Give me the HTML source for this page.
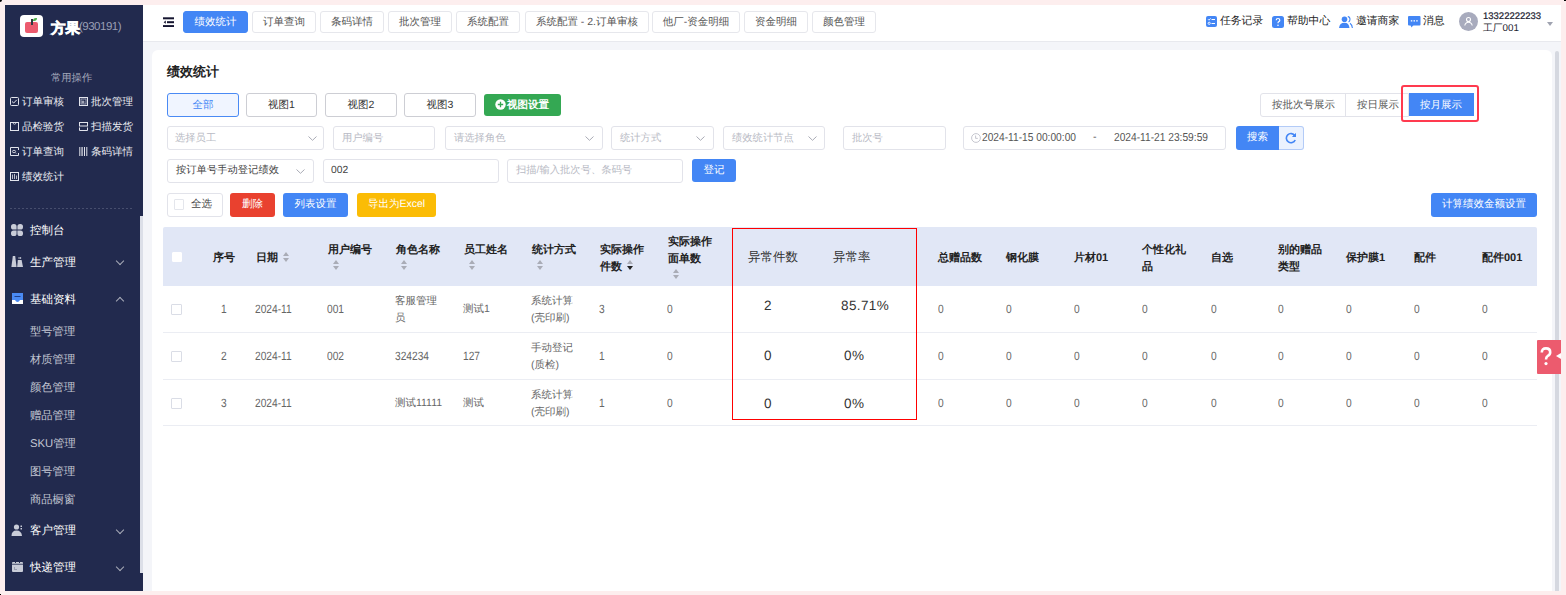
<!DOCTYPE html>
<html><head><meta charset="utf-8">
<style>
*{margin:0;padding:0;box-sizing:border-box;}
html,body{text-rendering:geometricPrecision;width:1566px;height:595px;overflow:hidden;background:#fdeeee;font-family:"Liberation Sans",sans-serif;}
.a{position:absolute;}
svg.a{z-index:2;}
.t{position:absolute;white-space:nowrap;}
#side{left:5px;top:5px;width:138px;height:586px;background:#222a4e;}
#hdr{left:143px;top:5px;width:1418px;height:37px;background:#fff;border-bottom:1px solid #e8e9ee;}
#main{left:143px;top:42px;width:1418px;height:549px;background:#f4f5f9;}
#card{left:152px;top:50px;width:1400px;height:541px;background:#fff;border-radius:6px 6px 0 0;}
.tab{position:absolute;top:11px;height:22px;border:1px solid #e6e7ec;border-radius:3px;font-size:10.5px;color:#555;text-align:center;line-height:20px;background:#fff;}
.tab.on{background:#4386f5;border-color:#4386f5;color:#fff;}
.sbi{position:absolute;font-size:10.5px;color:#e9eaf0;line-height:12px;white-space:nowrap;}
.btn{position:absolute;height:24px;border-radius:3px;font-size:10.5px;text-align:center;line-height:22px;white-space:nowrap;}
.inp{position:absolute;height:24px;border:1px solid #e2e3ea;border-radius:3px;font-size:10.3px;color:#b8bac4;line-height:22px;padding-left:8px;white-space:nowrap;background:#fff;}
.chev{position:absolute;width:6px;height:6px;border-right:1px solid #a8abb8;border-bottom:1px solid #a8abb8;transform:rotate(45deg);}
.chev.up{transform:rotate(-135deg);}
.mi{position:absolute;left:30px;font-size:11.5px;color:#fff;line-height:14px;white-space:nowrap;}
.si{position:absolute;left:30px;font-size:11.3px;color:#c3c6d2;line-height:14px;white-space:nowrap;}
.th{position:absolute;font-size:11px;font-weight:bold;color:#222;line-height:17.5px;white-space:nowrap;}
.td{position:absolute;font-size:10.5px;color:#666;line-height:17px;white-space:nowrap;}
.sort{position:absolute;width:6px;height:10px;}
.sort:before{content:"";position:absolute;left:0;top:0;border-left:3px solid transparent;border-right:3px solid transparent;border-bottom:4px solid #a9acb6;}
.sort:after{content:"";position:absolute;left:0;top:6px;border-left:3px solid transparent;border-right:3px solid transparent;border-top:4px solid #a9acb6;}
.sort.desc:after{border-top-color:#222;}
.cb{position:absolute;width:10px;height:10px;border:1px solid #e4e6ec;background:#fff;border-radius:1px;}
.num{position:absolute;font-size:13.5px;color:#333;line-height:18px;white-space:nowrap;letter-spacing:0.4px;}
.dg{font-size:12px;transform:scaleX(0.85);transform-origin:0 0;}
.hl{position:absolute;height:1px;background:#ebedf3;}
</style></head><body>

<!-- sidebar -->
<div id="side" class="a"></div>
<!-- logo -->
<div class="a" style="left:20px;top:15px;width:23px;height:22px;background:#fff;border-radius:4px;"></div>
<div class="a" style="left:25px;top:22px;width:13px;height:11px;background:#ec5b6e;border-radius:2px;"></div>
<div class="a" style="left:31px;top:19px;width:2px;height:6px;background:#2e3a40;"></div>
<div class="a" style="left:33px;top:18px;width:4px;height:3px;background:#4cb04a;border-radius:3px 0 3px 0;"></div>
<div class="t" style="left:51px;top:18.5px;font-size:14.5px;font-weight:bold;color:#fff;line-height:20px;-webkit-text-stroke:0.7px #fff;">方果</div>
<div class="t" style="left:79px;top:19px;font-size:11.5px;color:#9a9fb5;line-height:16px;letter-spacing:-0.5px;">(930191)</div>

<div class="t" style="left:51px;top:73px;font-size:10.3px;color:#a4a8bb;line-height:12px;">常用操作</div>
<svg class="a" style="left:10px;top:97px;" width="9" height="9" viewBox="0 0 9 9" fill="none" stroke="#e2e4ec" stroke-width="1"><rect x="0.5" y="0.5" width="8" height="8" rx="1"/><path d="M2 4.5 L3.7 6 L6.8 2.8"/></svg>
<div class="sbi" style="left:22px;top:96px;">订单审核</div>
<svg class="a" style="left:79px;top:97px;" width="9" height="9" viewBox="0 0 9 9" fill="none" stroke="#e2e4ec" stroke-width="1"><rect x="0.5" y="0.5" width="8" height="8"/><rect x="2" y="2" width="5" height="5" stroke="#9ea2b6"/><circle cx="4" cy="5" r="1" stroke="#d0d2dc"/></svg>
<div class="sbi" style="left:91px;top:96px;">批次管理</div>
<svg class="a" style="left:10px;top:122px;" width="9" height="9" viewBox="0 0 9 9" fill="none" stroke="#e2e4ec" stroke-width="1"><rect x="0.5" y="0.5" width="8" height="8"/><path d="M3.2 1 A1.3 1.3 0 0 0 5.8 1" stroke="#b8bbc8"/></svg>
<div class="sbi" style="left:22px;top:121px;">品检验货</div>
<svg class="a" style="left:79px;top:122px;" width="9" height="9" viewBox="0 0 9 9" fill="none" stroke="#e2e4ec" stroke-width="1"><rect x="0.5" y="0.5" width="8" height="3.5"/><path d="M0.5 5.5 V8.5 H8.5 V5.5"/></svg>
<div class="sbi" style="left:91px;top:121px;">扫描发货</div>
<svg class="a" style="left:10px;top:147px;" width="9" height="9" viewBox="0 0 9 9" fill="none" stroke="#e2e4ec" stroke-width="1"><path d="M8.5 3 V0.5 H0.5 V8.5 H8.5 V6"/><ellipse cx="4" cy="4.5" rx="1.6" ry="1.2" stroke="#c8cad6"/><path d="M5.2 5.5 L6.5 6.6" stroke="#9ea2b6"/></svg>
<div class="sbi" style="left:22px;top:146px;">订单查询</div>
<svg class="a" style="left:79px;top:147px;" width="9" height="9" viewBox="0 0 9 9" fill="#e2e4ec"><rect x="0.3" y="0" width="1" height="9"/><rect x="2.3" y="0" width="1.6" height="9" fill="#b5b8c6"/><rect x="5" y="0" width="1" height="9"/><rect x="7.3" y="0" width="1" height="9"/></svg>
<div class="sbi" style="left:91px;top:146px;">条码详情</div>
<svg class="a" style="left:10px;top:172px;" width="9" height="9" viewBox="0 0 9 9" fill="none" stroke="#e2e4ec" stroke-width="1"><rect x="0.5" y="0.5" width="8" height="8"/><path d="M2.5 2.5 V7 M4.5 2 V7 M6.5 3.5 V7" stroke="#b8bbc8"/></svg>
<div class="sbi" style="left:22px;top:171px;">绩效统计</div>
<div class="a" style="left:10px;top:208px;width:124px;height:1px;background:repeating-linear-gradient(90deg,#474e6e 0 2px,transparent 2px 4px);"></div>

<svg class="a" style="left:11px;top:224px;" width="12" height="12" viewBox="0 0 12 12" fill="#c9ccd8"><path d="M5.6 5.6 H2.6 A2.6 2.6 0 0 1 0 3 V2.6 A2.6 2.6 0 0 1 2.6 0 H3 A2.6 2.6 0 0 1 5.6 2.6 Z"/><path d="M6.4 5.6 H9.4 A2.6 2.6 0 0 0 12 3 V2.6 A2.6 2.6 0 0 0 9.4 0 H9 A2.6 2.6 0 0 0 6.4 2.6 Z"/><path d="M5.6 6.4 H2.6 A2.6 2.6 0 0 0 0 9 V9.4 A2.6 2.6 0 0 0 2.6 12 H3 A2.6 2.6 0 0 0 5.6 9.4 Z"/><path d="M6.4 6.4 H9.4 A2.6 2.6 0 0 1 12 9 V9.4 A2.6 2.6 0 0 1 9.4 12 H9 A2.6 2.6 0 0 1 6.4 9.4 Z"/></svg>
<div class="mi" style="top:224px;">控制台</div>
<svg class="a" style="left:11px;top:256px;" width="13" height="11" viewBox="0 0 13 11" fill="#c9ccd8"><path d="M1.8 0 H4.2 L5.6 11 H0.4 Z"/><path d="M6.8 4 H10.6 L12 11 H6.2 Z"/><rect x="7.6" y="1" width="0.9" height="2"/><rect x="9.2" y="1" width="0.9" height="2"/></svg>
<div class="mi" style="top:256px;">生产管理</div>
<div class="chev" style="left:117px;top:258px;"></div>
<svg class="a" style="left:12px;top:293px;" width="11" height="11" viewBox="0 0 11 11"><rect x="0" y="0" width="11" height="11" fill="#4a8af4"/><path d="M0 7 H3 Q4 9 5.5 9 Q7 9 8 7 H11 V11 H0 Z" fill="#fff"/><rect x="2.5" y="3" width="6" height="1" fill="#1f3f8a"/></svg>
<div class="mi" style="top:293px;">基础资料</div>
<div class="chev up" style="left:117px;top:298px;"></div>
<div class="si" style="top:324.5px;">型号管理</div>
<div class="si" style="top:352.5px;">材质管理</div>
<div class="si" style="top:380.5px;">颜色管理</div>
<div class="si" style="top:408.5px;">赠品管理</div>
<div class="si" style="top:436.5px;">SKU管理</div>
<div class="si" style="top:464.5px;">图号管理</div>
<div class="si" style="top:492.5px;">商品橱窗</div>
<svg class="a" style="left:11px;top:524px;" width="12" height="12" viewBox="0 0 12 12" fill="#c9ccd8"><circle cx="5.5" cy="3" r="2.6"/><path d="M0.5 12 Q0.5 6.5 5.5 6.5 Q10.5 6.5 11 12 Z"/><rect x="9.5" y="1.5" width="1.5" height="1.5"/><rect x="9.5" y="4" width="1.5" height="1.5"/></svg>
<div class="mi" style="top:524px;">客户管理</div>
<div class="chev" style="left:117px;top:527px;"></div>
<svg class="a" style="left:12px;top:561px;" width="11" height="11" viewBox="0 0 11 11" fill="#c9ccd8"><rect x="0" y="1" width="11" height="10" rx="1"/><rect x="0" y="2.8" width="11" height="0.8" fill="#222a4e"/><rect x="2" y="6" width="1" height="2" fill="#9a9eb0"/><rect x="2" y="8" width="3" height="1" fill="#9a9eb0"/><rect x="3" y="0" width="1" height="2" fill="#222a4e"/><rect x="7" y="0" width="1" height="2" fill="#222a4e"/></svg>
<div class="mi" style="top:561px;">快递管理</div>
<div class="chev" style="left:117px;top:564px;"></div>
<div class="a" style="left:140px;top:216px;width:3px;height:357px;background:#dcdfe8;"></div>

<!-- header -->
<div id="hdr" class="a"></div>
<div id="main" class="a"></div>
<div id="card" class="a"></div>

<div class="tab on" style="left:183px;width:65px;">绩效统计</div>
<div class="tab" style="left:252px;width:64px;">订单查询</div>
<div class="tab" style="left:320px;width:64px;">条码详情</div>
<div class="tab" style="left:388px;width:64px;">批次管理</div>
<div class="tab" style="left:456px;width:64px;">系统配置</div>
<div class="tab" style="left:525px;width:124px;">系统配置 - 2.订单审核</div>
<div class="tab" style="left:652px;width:88px;">他厂-资金明细</div>
<div class="tab" style="left:744px;width:64px;">资金明细</div>
<div class="tab" style="left:812px;width:64px;">颜色管理</div>

<svg class="a" style="left:163px;top:17px;" width="11" height="10" viewBox="0 0 11 10" fill="#151530"><rect x="0" y="0.3" width="11" height="2"/><rect x="4" y="4.2" width="7" height="2"/><path d="M0.6 5.2 L2.8 3.6 V6.8 Z"/><rect x="0" y="8.1" width="11" height="2"/></svg>
<svg class="a" style="left:1206px;top:16px;" width="11" height="11" viewBox="0 0 11 11"><rect x="0" y="0" width="11" height="11" rx="2" fill="#4386f5"/><path d="M2 3.2 L3 4.2 L4.6 2.4" stroke="#fff" stroke-width="0.9" fill="none"/><rect x="5.5" y="3" width="3.5" height="1" fill="#fff"/><circle cx="3.2" cy="7.3" r="1.1" stroke="#fff" stroke-width="0.9" fill="none"/><rect x="5.5" y="7" width="3.5" height="1" fill="#fff"/></svg>
<div class="t" style="left:1220px;top:15px;font-size:10.8px;color:#222;line-height:13px;">任务记录</div>
<svg class="a" style="left:1272px;top:16px;" width="12" height="12" viewBox="0 0 12 12"><rect x="0" y="0" width="12" height="12" rx="2.5" fill="#4386f5"/><path d="M4.2 4.3 Q4.2 2.5 6 2.5 Q7.8 2.5 7.8 4.2 Q7.8 5.2 6.6 5.8 Q6 6.2 6 7.3" stroke="#fff" stroke-width="1.2" fill="none"/><circle cx="6" cy="9.2" r="0.8" fill="#fff"/></svg>
<div class="t" style="left:1287px;top:15px;font-size:10.8px;color:#222;line-height:13px;">帮助中心</div>
<svg class="a" style="left:1339px;top:16px;" width="14" height="12" viewBox="0 0 14 12" fill="#4386f5"><circle cx="5.5" cy="3.3" r="2.8"/><path d="M0 12 Q0.5 6.8 5.5 6.8 Q10 6.8 10.5 12 Z"/><path d="M8.8 0.6 Q11 0.8 11 3.3 Q11 5.2 9.6 5.9" stroke="#4386f5" stroke-width="1.1" fill="none"/><path d="M11 7.2 Q13 8.5 13.4 12" stroke="#4386f5" stroke-width="1.1" fill="none"/></svg>
<div class="t" style="left:1356px;top:15px;font-size:10.8px;color:#222;line-height:13px;">邀请商家</div>
<svg class="a" style="left:1408px;top:16px;" width="13" height="12" viewBox="0 0 13 12"><rect x="0" y="0" width="12.5" height="9.5" rx="1" fill="#4386f5"/><path d="M2.5 9 H5.5 L3.5 11.5 Z" fill="#4386f5"/><rect x="2.8" y="4.2" width="1.5" height="1.3" fill="#fff"/><rect x="5.5" y="4.2" width="1.5" height="1.3" fill="#fff"/><rect x="8.2" y="4.2" width="1.5" height="1.3" fill="#fff"/></svg>
<div class="t" style="left:1423px;top:15px;font-size:10.8px;color:#222;line-height:13px;">消息</div>
<div class="a" style="left:1459px;top:12px;width:19px;height:19px;border-radius:50%;background:#a8abbd;"></div>
<svg class="a" style="left:1463px;top:16px;" width="11" height="11" viewBox="0 0 11 11" fill="none" stroke="#fff" stroke-width="1.1"><circle cx="5.5" cy="3.5" r="2"/><path d="M1.8 9.5 Q2.5 6.3 5.5 6.3 Q8.5 6.3 9.2 9.5"/></svg>
<div class="t" style="left:1483px;top:11px;font-size:9.5px;color:#1c1c30;line-height:11px;-webkit-text-stroke:0.2px #1c1c30;">13322222233</div>
<div class="t" style="left:1483px;top:22.5px;font-size:9.8px;color:#1c1c30;line-height:11px;">工厂001</div>
<div class="a" style="left:1547px;top:22px;width:0;height:0;border-left:3.5px solid transparent;border-right:3.5px solid transparent;border-top:4px solid #a0a3b0;"></div>

<div class="a" style="left:1555px;top:51px;width:4px;height:540px;border-radius:2px 2px 0 0;background:#d5d8e0;"></div>
<!-- content -->
<div class="t" style="left:167px;top:63px;font-size:13px;font-weight:bold;color:#222;line-height:17px;">绩效统计</div>

<div class="btn" style="left:167px;top:93px;width:72px;border:1px solid #4a8af4;background:#f0f5ff;color:#4386f5;">全部</div>
<div class="btn" style="left:246px;top:93px;width:71px;border:1px solid #cdced4;background:#fff;color:#333;">视图1</div>
<div class="btn" style="left:325px;top:93px;width:72px;border:1px solid #cdced4;background:#fff;color:#333;">视图2</div>
<div class="btn" style="left:404px;top:93px;width:72px;border:1px solid #cdced4;background:#fff;color:#333;">视图3</div>
<div class="btn" style="left:484px;top:94px;width:77px;height:22px;background:#34a853;"></div>
<svg class="a" style="left:495px;top:99px;" width="11" height="11" viewBox="0 0 11 11"><circle cx="5.5" cy="5.5" r="5.2" fill="#fff"/><path d="M5.5 2.8 V8.2 M2.8 5.5 H8.2" stroke="#34a853" stroke-width="1.3"/></svg>
<div class="t" style="left:507px;top:97px;font-size:10.5px;font-weight:bold;color:#fff;line-height:16px;">视图设置</div>

<div class="btn" style="left:1260px;top:93px;width:149px;border:1px solid #e2e3ea;background:#fff;border-radius:3px 0 0 3px;"></div>
<div class="a" style="left:1345px;top:94px;width:1px;height:22px;background:#e2e3ea;"></div>
<div class="t" style="left:1272px;top:96.5px;font-size:10.5px;color:#555;line-height:16px;">按批次号展示</div>
<div class="t" style="left:1357px;top:96.5px;font-size:10.5px;color:#555;line-height:16px;">按日展示</div>
<div class="a" style="left:1409px;top:93px;width:65px;height:23px;background:#4386f5;"></div>
<div class="t" style="left:1420px;top:96.5px;font-size:10.5px;color:#fff;line-height:16px;">按月展示</div>
<div class="a" style="left:1401px;top:85px;width:78px;height:37px;border:2px solid #ff3a4f;border-radius:3px;"></div>

<div class="inp" style="left:167px;top:126px;width:157px;padding-left:7px;line-height:24px;">选择员工</div>
<div class="inp" style="left:333px;top:126px;width:102px;line-height:24px;">用户编号</div>
<div class="inp" style="left:445px;top:126px;width:158px;line-height:24px;">请选择角色</div>
<div class="inp" style="left:611px;top:126px;width:103px;line-height:24px;">统计方式</div>
<div class="inp" style="left:723px;top:126px;width:102px;line-height:24px;">绩效统计节点</div>
<div class="inp" style="left:843px;top:126px;width:103px;line-height:24px;">批次号</div>
<div class="inp" style="left:963px;top:126px;width:263px;line-height:24px;"></div>
<svg class="a" style="left:971px;top:133px;" width="10" height="10" viewBox="0 0 10 10" fill="none" stroke="#bfc1c9" stroke-width="0.9"><circle cx="5" cy="5" r="4.4"/><path d="M4.6 2.5 V5.4 H6.8"/></svg>
<div class="t" style="left:982px;top:129px;font-size:11.6px;color:#555;line-height:18px;transform:scaleX(0.88);transform-origin:0 0;">2024-11-15 00:00:00</div>
<div class="t" style="left:1093px;top:129px;font-size:10.6px;color:#555;line-height:16px;">-</div>
<div class="t" style="left:1114px;top:129px;font-size:11.6px;color:#555;line-height:18px;transform:scaleX(0.88);transform-origin:0 0;">2024-11-21 23:59:59</div>
<div class="btn" style="left:1236px;top:126px;width:43px;background:#4386f5;color:#fff;border-radius:3px 0 0 3px;"></div>
<div class="t" style="left:1247px;top:129px;font-size:10.5px;color:#fff;line-height:16px;">搜索</div>
<div class="btn" style="left:1279px;top:126px;width:25px;background:#ebf2fe;border:1px solid #b3cbf7;border-left:none;border-radius:0 3px 3px 0;"></div>
<svg class="a" style="left:1285px;top:132px;" width="12" height="12" viewBox="0 0 12 12" fill="none" stroke="#4386f5" stroke-width="1.6"><path d="M9.8 3.6 A4.6 4.6 0 1 0 10.2 8"/><path d="M10.6 1.2 V4.4 H7.4" stroke-width="0" fill="#4386f5"/><path d="M11 1 L11 5 L7 5 Z" fill="#4386f5" stroke="none"/></svg>

<svg class="a" style="left:308px;top:136px;" width="9" height="5" viewBox="0 0 9 5" fill="none" stroke="#a9abb5" stroke-width="1"><path d="M0.5 0.5 L4.5 4.3 L8.5 0.5"/></svg><svg class="a" style="left:585px;top:136px;" width="9" height="5" viewBox="0 0 9 5" fill="none" stroke="#a9abb5" stroke-width="1"><path d="M0.5 0.5 L4.5 4.3 L8.5 0.5"/></svg><svg class="a" style="left:696px;top:136px;" width="9" height="5" viewBox="0 0 9 5" fill="none" stroke="#a9abb5" stroke-width="1"><path d="M0.5 0.5 L4.5 4.3 L8.5 0.5"/></svg><svg class="a" style="left:808px;top:136px;" width="9" height="5" viewBox="0 0 9 5" fill="none" stroke="#a9abb5" stroke-width="1"><path d="M0.5 0.5 L4.5 4.3 L8.5 0.5"/></svg><svg class="a" style="left:296px;top:169px;" width="9" height="5" viewBox="0 0 9 5" fill="none" stroke="#a9abb5" stroke-width="1"><path d="M0.5 0.5 L4.5 4.3 L8.5 0.5"/></svg>
<div class="inp" style="left:167px;top:159px;width:147px;color:#444;">按订单号手动登记绩效</div>
<div class="inp" style="left:323px;top:159px;width:176px;color:#444;padding-left:7px;">002</div>
<div class="inp" style="left:507px;top:159px;width:176px;">扫描/输入批次号、条码号</div>
<div class="btn" style="left:692px;top:159px;width:44px;height:23px;background:#4386f5;color:#fff;">登记</div>

<div class="btn" style="left:167px;top:193px;width:56px;border:1px solid #e2e3ea;background:#fff;"></div>
<div class="t" style="left:191px;top:196px;font-size:10.5px;color:#444;line-height:16px;">全选</div>
<div class="cb" style="left:174px;top:199px;width:10px;height:11px;"></div>
<div class="btn" style="left:230px;top:193px;width:45px;background:#e9412f;color:#fff;">删除</div>
<div class="btn" style="left:283px;top:193px;width:65px;background:#4386f5;color:#fff;">列表设置</div>
<div class="btn" style="left:357px;top:193px;width:79px;background:#fbbc05;color:#fff;">导出为Excel</div>
<div class="btn" style="left:1431px;top:193px;width:106px;background:#4386f5;color:#fff;">计算绩效金额设置</div>

<!-- table -->
<div class="a" style="left:163px;top:227px;width:1374px;height:59px;background:#e1e7f6;border-radius:2px 2px 0 0;"></div>
<div class="hl" style="left:163px;top:332px;width:1374px;"></div>
<div class="hl" style="left:163px;top:379px;width:1374px;"></div>
<div class="hl" style="left:163px;top:425px;width:1374px;"></div>
<div class="cb" style="left:171.5px;top:252px;border-color:#fff;"></div>
<div class="th" style="left:213px;top:250px;">序号</div>
<div class="th" style="left:256px;top:250px;">日期</div>
<div class="sort" style="left:283px;top:252px;"></div>
<div class="th" style="left:328px;top:241.5px;">用户编号</div>
<div class="sort" style="left:333px;top:260px;"></div>
<div class="th" style="left:396px;top:241.5px;">角色名称</div>
<div class="sort" style="left:401px;top:260px;"></div>
<div class="th" style="left:464px;top:241.5px;">员工姓名</div>
<div class="sort" style="left:469px;top:260px;"></div>
<div class="th" style="left:532px;top:241.5px;">统计方式</div>
<div class="sort" style="left:537px;top:260px;"></div>
<div class="th" style="left:600px;top:241.5px;">实际操作<br>件数</div>
<div class="sort desc" style="left:627px;top:260px;"></div>
<div class="th" style="left:668px;top:233.5px;">实际操作<br>面单数</div>
<div class="sort" style="left:673px;top:269px;"></div>
<div class="a" style="left:733px;top:228px;width:183px;height:57px;background:#e1e7f6;"></div>
<div class="t" style="left:748px;top:248.5px;font-size:12.5px;color:#333;line-height:16px;">异常件数</div>
<div class="t" style="left:833px;top:248.5px;font-size:12.5px;color:#333;line-height:16px;">异常率</div>
<div class="th" style="left:938px;top:250px;">总赠品数</div>
<div class="th" style="left:1006px;top:250px;">钢化膜</div>
<div class="th" style="left:1074px;top:250px;">片材01</div>
<div class="th" style="left:1142px;top:241.5px;">个性化礼<br>品</div>
<div class="th" style="left:1211px;top:250px;">自选</div>
<div class="th" style="left:1278px;top:241.5px;">别的赠品<br>类型</div>
<div class="th" style="left:1346px;top:250px;">保护膜1</div>
<div class="th" style="left:1414px;top:250px;">配件</div>
<div class="th" style="left:1482px;top:250px;">配件001</div>
<div class="cb" style="left:171px;top:304px;width:11px;height:11px;border-color:#dadde6;"></div>
<div class="td dg" style="left:221px;top:301px;">1</div>
<div class="td dg" style="left:255px;top:301px;">2024-11</div>
<div class="td dg" style="left:327px;top:301px;">001</div>
<div class="td" style="left:395px;top:293px;">客服管理<br>员</div>
<div class="td" style="left:463px;top:301px;">测试1</div>
<div class="td" style="left:531px;top:293px;">系统计算<br>(壳印刷)</div>
<div class="td dg" style="left:599px;top:301px;">3</div>
<div class="td dg" style="left:667px;top:301px;">0</div>
<div class="num" style="left:764px;top:297px;">2</div>
<div class="num" style="left:841px;top:297px;">85.71%</div>
<div class="td dg" style="left:938px;top:301px;">0</div>
<div class="td dg" style="left:1006px;top:301px;">0</div>
<div class="td dg" style="left:1074px;top:301px;">0</div>
<div class="td dg" style="left:1142px;top:301px;">0</div>
<div class="td dg" style="left:1211px;top:301px;">0</div>
<div class="td dg" style="left:1278px;top:301px;">0</div>
<div class="td dg" style="left:1346px;top:301px;">0</div>
<div class="td dg" style="left:1414px;top:301px;">0</div>
<div class="td dg" style="left:1482px;top:301px;">0</div>
<div class="cb" style="left:171px;top:351px;width:11px;height:11px;border-color:#dadde6;"></div>
<div class="td dg" style="left:221px;top:348px;">2</div>
<div class="td dg" style="left:255px;top:348px;">2024-11</div>
<div class="td dg" style="left:327px;top:348px;">002</div>
<div class="td dg" style="left:395px;top:348px;">324234</div>
<div class="td dg" style="left:463px;top:348px;">127</div>
<div class="td" style="left:531px;top:340px;">手动登记<br>(质检)</div>
<div class="td dg" style="left:599px;top:348px;">1</div>
<div class="td dg" style="left:667px;top:348px;">0</div>
<div class="num" style="left:764px;top:347px;">0</div>
<div class="num" style="left:844px;top:347px;">0%</div>
<div class="td dg" style="left:938px;top:348px;">0</div>
<div class="td dg" style="left:1006px;top:348px;">0</div>
<div class="td dg" style="left:1074px;top:348px;">0</div>
<div class="td dg" style="left:1142px;top:348px;">0</div>
<div class="td dg" style="left:1211px;top:348px;">0</div>
<div class="td dg" style="left:1278px;top:348px;">0</div>
<div class="td dg" style="left:1346px;top:348px;">0</div>
<div class="td dg" style="left:1414px;top:348px;">0</div>
<div class="td dg" style="left:1482px;top:348px;">0</div>
<div class="cb" style="left:171px;top:398px;width:11px;height:11px;border-color:#dadde6;"></div>
<div class="td dg" style="left:221px;top:395px;">3</div>
<div class="td dg" style="left:255px;top:395px;">2024-11</div>
<div class="td" style="left:327px;top:395px;"></div>
<div class="td" style="left:395px;top:395px;">测试11111</div>
<div class="td" style="left:463px;top:395px;">测试</div>
<div class="td" style="left:531px;top:387px;">系统计算<br>(壳印刷)</div>
<div class="td dg" style="left:599px;top:395px;">1</div>
<div class="td dg" style="left:667px;top:395px;">0</div>
<div class="num" style="left:764px;top:395px;">0</div>
<div class="num" style="left:844px;top:395px;">0%</div>
<div class="td dg" style="left:938px;top:395px;">0</div>
<div class="td dg" style="left:1006px;top:395px;">0</div>
<div class="td dg" style="left:1074px;top:395px;">0</div>
<div class="td dg" style="left:1142px;top:395px;">0</div>
<div class="td dg" style="left:1211px;top:395px;">0</div>
<div class="td dg" style="left:1278px;top:395px;">0</div>
<div class="td dg" style="left:1346px;top:395px;">0</div>
<div class="td dg" style="left:1414px;top:395px;">0</div>
<div class="td dg" style="left:1482px;top:395px;">0</div>
<div class="a" style="left:732px;top:228px;width:185px;height:192px;border:1.3px solid #ff0000;"></div>
<!-- /table -->
<div class="a" style="left:0;top:0;width:2px;height:2px;background:#000;border-radius:0 0 2px 0;"></div>
<div class="a" style="left:1564px;top:0;width:2px;height:1px;background:#000;"></div>
<div class="a" style="left:0;top:594px;width:1px;height:1px;background:#000;"></div>
<!-- help -->
<div class="a" style="left:1537px;top:340px;width:24px;height:34px;background:#ec5b6e;border-radius:1px 0 0 1px;z-index:3;"></div>
<svg class="a" style="left:1540px;top:347px;z-index:4;" width="12" height="19" viewBox="0 0 12 19" fill="none" stroke="#fff" stroke-width="2.6"><path d="M1.8 5.6 Q1.8 1.4 6 1.4 Q10.2 1.4 10.2 5.2 Q10.2 7.6 7.8 8.8 Q6 9.8 6 12.6"/><circle cx="6" cy="16.6" r="1.6" fill="#fff" stroke="none"/></svg>
<div class="a" style="left:1556px;top:353px;width:0;height:0;border-top:3.5px solid transparent;border-bottom:3.5px solid transparent;border-right:5px solid #fff;z-index:4;"></div>
</body></html>
